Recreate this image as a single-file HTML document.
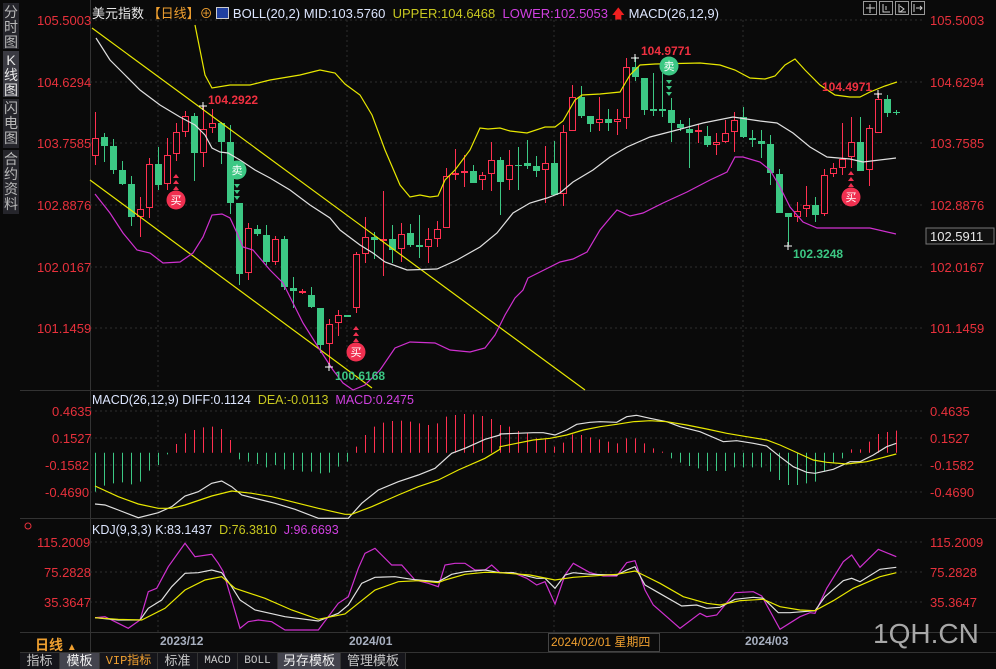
<!DOCTYPE html>
<html><head><meta charset="utf-8"><style>
body{margin:0;width:996px;height:669px;background:#0a0a0a;overflow:hidden;font-family:"Liberation Sans","Noto Sans CJK SC",sans-serif;position:relative}
.ab{position:absolute;white-space:nowrap}
.side{position:absolute;left:3px;width:16px;background:#25252b;color:#b8b8b8;font-size:14px;line-height:15px;text-align:center}
.tab{position:absolute;top:653px;height:16px;font-size:13px;line-height:16px;text-align:center;color:#c8c8c8;background:#15151a;border-right:1px solid #333}
</style></head><body>
<div class="side" style="top:3px;height:44px;padding-top:2px">分<br>时<br>图</div>
<div class="side" style="top:51px;height:44px;padding-top:2px;background:#3a3a42;color:#e8e8e8">K<br>线<br>图</div>
<div class="side" style="top:99px;height:47px;padding-top:2px">闪<br>电<br>图</div>
<div class="side" style="top:150px;height:62px;padding-top:2px">合<br>约<br>资<br>料</div>

<svg class="ab" style="left:0;top:0" width="996" height="669" xmlns="http://www.w3.org/2000/svg" id="s">
<g stroke="#2e2e2e" stroke-dasharray="2,3" stroke-width="1">
<line x1="90" y1="20" x2="925" y2="20"/><line x1="90" y1="82" x2="925" y2="82"/><line x1="90" y1="143" x2="925" y2="143"/><line x1="90" y1="205" x2="925" y2="205"/><line x1="90" y1="267" x2="925" y2="267"/><line x1="90" y1="328" x2="925" y2="328"/>
<line x1="90" y1="411" x2="925" y2="411"/><line x1="90" y1="438" x2="925" y2="438"/><line x1="90" y1="465" x2="925" y2="465"/><line x1="90" y1="492" x2="925" y2="492"/>
<line x1="90" y1="542" x2="925" y2="542"/><line x1="90" y1="572" x2="925" y2="572"/><line x1="90" y1="602" x2="925" y2="602"/>
<line x1="158" y1="20" x2="158" y2="632"/><line x1="347" y1="20" x2="347" y2="632"/><line x1="554" y1="20" x2="554" y2="632"/><line x1="743" y1="20" x2="743" y2="632"/>
</g>
<g stroke="#333" stroke-width="1">
<line x1="90.5" y1="0" x2="90.5" y2="652"/><line x1="20" y1="390.5" x2="996" y2="390.5"/><line x1="20" y1="518.5" x2="996" y2="518.5"/><line x1="20" y1="632.5" x2="996" y2="632.5"/><line x1="20" y1="652.5" x2="996" y2="652.5"/>
</g>
<g fill="#e8313c" font-size="13" font-family="Liberation Sans, sans-serif">
<text x="37" y="25">105.5003</text><text x="37" y="87">104.6294</text><text x="37" y="148">103.7585</text><text x="37" y="210">102.8876</text><text x="37" y="272">102.0167</text><text x="37" y="333">101.1459</text>
<text x="930" y="25">105.5003</text><text x="930" y="87">104.6294</text><text x="930" y="148">103.7585</text><text x="930" y="210">102.8876</text><text x="930" y="272">102.0167</text><text x="930" y="333">101.1459</text>
<text x="52" y="416">0.4635</text><text x="52" y="443">0.1527</text><text x="45" y="470">-0.1582</text><text x="45" y="497">-0.4690</text>
<text x="930" y="416">0.4635</text><text x="930" y="443">0.1527</text><text x="930" y="470">-0.1582</text><text x="930" y="497">-0.4690</text>
<text x="37" y="547">115.2009</text><text x="44" y="577">75.2828</text><text x="44" y="607">35.3647</text>
<text x="930" y="547">115.2009</text><text x="930" y="577">75.2828</text><text x="930" y="607">35.3647</text>
</g>
<rect x="926" y="228" width="68" height="16" fill="#111" stroke="#777"/>
<text x="930" y="241" fill="#e8e8e8" font-size="13">102.5911</text>
<g id="cd"></g>
<g fill="none" stroke-width="1.2">
<line x1="92" y1="28" x2="585" y2="390" stroke="#e8e800"/>
<line x1="90" y1="180" x2="372" y2="388" stroke="#e8e800"/>
<polyline stroke="#e8e800" points="195,25 205,75 212,88 230,85 250,85 270,80 300,75 320,70 335,73 345,84 360,95 372,115 385,150 400,185 410,197 420,195 430,197 438,196 445,180 455,170 470,150 480,128 488,129 500,128 510,131 527,133 545,127 555,127 563,121 575,100 582,95 600,94 620,92 630,75 640,65 655,64 700,63 720,65 735,70 750,78 765,79 775,76 785,65 795,59 805,70 820,85 835,95 850,97 860,97 870,92 885,86 897,82"/>
<polyline stroke="#e0e0e0" points="96,38 110,60 125,75 140,90 160,105 180,117 195,125 205,135 212,148 220,152 228,153 240,160 255,170 270,178 290,190 310,205 330,218 340,230 360,245 373,253 385,262 407,270 437,269 457,260 480,247 497,233 513,213 530,203 547,198 560,193 573,182 593,170 610,157 627,147 650,137 677,130 703,123 733,117 760,121 777,123 793,133 810,147 827,157 850,159 863,162 896,158"/>
<polyline stroke="#d030d0" points="95,194 110,213 123,233 137,250 150,253 163,263 180,262 193,253 203,237 212,215 222,214 230,218 237,233 243,247 253,250 270,270 283,283 293,303 303,323 320,350 333,370 343,383 353,390 365,385 380,370 395,348 410,342 435,343 450,350 470,352 485,348 495,335 505,315 515,298 523,290 528,278 540,272 560,262 573,259 587,252 600,230 610,218 617,210 630,216 643,213 663,203 687,192 710,180 727,172 735,157 743,157 760,162 770,170 780,187 790,207 803,222 817,228 843,228 870,228 896,234"/>
</g>
<g font-size="12" font-weight="bold">
<text x="208" y="104" fill="#f03040">104.2922</text>
<text x="335" y="380" fill="#3cc884">100.6168</text>
<text x="641" y="55" fill="#f03040">104.9771</text>
<text x="793" y="258" fill="#3cc884">102.3248</text>
<text x="822" y="91" fill="#f03040">104.4971</text>
</g>
<g stroke="#fff" stroke-width="1"><path d="M199 106h8M203 102v8M325 367h8M329 363v8M631 58h8M635 54v8M784 246h8M788 242v8M874 94h8M878 90v8"/></g>
<g font-size="11" text-anchor="middle" fill="#fff">
<circle cx="176" cy="200" r="9.5" fill="#f03050"/><text x="176" y="204">买</text><path d="M176 174l-3 4h6zM176 180l-3 4h6zM176 186l-3 4h6z" fill="#f03050"/>
<circle cx="356" cy="352" r="9.5" fill="#f03050"/><text x="356" y="356">买</text><path d="M356 326l-3 4h6zM356 332l-3 4h6zM356 338l-3 4h6z" fill="#f03050"/>
<circle cx="851" cy="197" r="9.5" fill="#f03050"/><text x="851" y="201">买</text><path d="M851 171l-3 4h6zM851 177l-3 4h6zM851 183l-3 4h6z" fill="#f03050"/>
<circle cx="237" cy="170" r="9.5" fill="#3cc884"/><text x="237" y="174">卖</text><path d="M237 188l-3 -4h6zM237 194l-3 -4h6zM237 200l-3 -4h6z" fill="#3cc884"/>
<circle cx="669" cy="66" r="9.5" fill="#3cc884"/><text x="669" y="70">卖</text><path d="M669 84l-3 -4h6zM669 90l-3 -4h6zM669 96l-3 -4h6z" fill="#3cc884"/>
</g>
<g id="mb"></g>
<g fill="none" stroke-width="1.2">
<polyline stroke="#e0e0e0" id="dif" points=""/>
<polyline stroke="#e8e800" id="dea" points=""/>
<polyline stroke="#d030d0" id="kj" points=""/>
<polyline stroke="#e0e0e0" id="kk" points=""/>
<polyline stroke="#e8e800" id="kd" points=""/>
</g>
<text x="873" y="643" fill="#a8a8a8" font-size="28">1QH.CN</text>
<g fill="none" stroke="#999"><rect x="863.5" y="1.5" width="13" height="13"/><rect x="879.5" y="1.5" width="13" height="13"/><rect x="895.5" y="1.5" width="13" height="13"/><rect x="911.5" y="1.5" width="13" height="13"/>
<path d="M870 4v9M866 8h9M883 4v8h7M886 6v4M899 4v8h7M900 6l4 3-4 3M914 4v8M916 8h6M920 6l2 2-2 2" stroke="#ccc"/></g>
<circle cx="28" cy="526" r="3" fill="none" stroke="#e8313c"/>
</svg>

<div class="ab" style="left:92px;top:3px;font-size:13px;color:#e8e8e8">美元指数 <span style="color:#f0a030">【日线】</span><span style="color:#f0a030">⊕</span> <span style="display:inline-block;width:11px;height:10px;border:1px solid #ccc;background:#2040a0;vertical-align:-1px"></span> <span style="color:#dde6ff">BOLL(20,2) MID:103.5760</span> &nbsp;<span style="color:#c8c820">UPPER:104.6468</span> &nbsp;<span style="color:#d040e0">LOWER:102.5053</span> <span style="color:#f02020">🡅</span> <span style="color:#dde6ff">MACD(26,12,9)</span></div>
<div class="ab" style="left:92px;top:393px;font-size:12.5px;color:#dde6ff">MACD(26,12,9) DIFF:0.1124 &nbsp;<span style="color:#c8c820">DEA:-0.0113</span> &nbsp;<span style="color:#d040e0">MACD:0.2475</span></div>
<div class="ab" style="left:92px;top:523px;font-size:12.5px;color:#dde6ff">KDJ(9,3,3) K:83.1437 &nbsp;<span style="color:#c8c820">D:76.3810</span> &nbsp;<span style="color:#d040e0">J:96.6693</span></div>
<div class="ab" style="left:35px;top:635px;font-size:14px;font-weight:bold;color:#f0a030">日线 <span style="font-size:10px">▲</span></div>
<div class="ab" style="left:160px;top:634px;font-size:12px;font-weight:bold;color:#a8b0c0">2023/12</div>
<div class="ab" style="left:349px;top:634px;font-size:12px;font-weight:bold;color:#a8b0c0">2024/01</div>
<div class="ab" style="left:548px;top:633px;width:108px;height:17px;border:1px solid #444;font-size:12px;color:#f0a030;line-height:17px;padding-left:2px">2024/02/01 星期四</div>
<div class="ab" style="left:745px;top:634px;font-size:12px;font-weight:bold;color:#a8b0c0">2024/03</div>

<div class="tab" style="left:20px;width:39px">指标</div>
<div class="tab" style="left:60px;width:39px;background:#44444e;color:#f0f0f0">模板</div>
<div class="tab" style="left:100px;width:57px;color:#f0a030;font-family:'Liberation Mono','Noto Sans CJK SC',monospace;font-size:12px">VIP指标</div>
<div class="tab" style="left:158px;width:39px">标准</div>
<div class="tab" style="left:198px;width:39px;font-family:'Liberation Mono',monospace;font-size:11px">MACD</div>
<div class="tab" style="left:238px;width:39px;font-family:'Liberation Mono',monospace;font-size:11px">BOLL</div>
<div class="tab" style="left:278px;width:62px;background:#44444e;color:#f0f0f0">另存模板</div>
<div class="tab" style="left:341px;width:64px">管理模板</div>

<script>
var C=`r 138 156 112 165|g 137 146 133 162|g 146 170 139 174|g 170 184 161 185|g 184 217 176 226|r 209 217 197 237|r 164 208 158 218|g 164 185 147 190|r 155 184 138 190|r 132 154 123 161|r 116 132 111 137|g 116 153 113 181|r 129 153 106 167|r 123 128 109 133|g 123 142 122 164|g 142 203 125 214|g 203 274 203 285|r 228 273 223 280|g 229 234 225 236|g 235 262 225 265|r 239 262 236 265|g 239 287 236 290|g 288 291 277 308|r 291 293 289 294|g 295 307 287 308|g 308 345 308 353|r 324 344 319 366|r 315 323 310 336|g 315 317 315 317|r 254 308 252 313|r 237 254 217 263|g 237 240 232 259|r 239 241 191 276|g 239 250 225 263|r 234 249 223 262|g 233 245 224 247|g 245 247 215 258|r 239 247 228 263|r 229 239 221 247|r 176 228 168 228|r 173 175 149 180|r 171 173 155 187|g 171 183 165 183|r 175 180 172 190|r 160 174 142 191|g 160 182 157 215|r 165 180 150 190|g 165 166 147 190|g 163 166 140 169|g 166 171 156 177|r 163 170 146 203|g 163 195 141 195|r 132 194 125 206|r 97 131 85 131|g 97 116 86 118|g 116 124 116 132|r 119 123 97 131|g 119 123 109 131|r 119 122 109 135|r 67 118 58 129|g 67 77 57 81|g 78 110 78 115|g 109 111 73 116|g 109 111 73 117|g 110 123 98 142|g 124 128 120 131|g 129 133 118 168|r 130 132 124 143|g 136 145 126 147|r 142 145 133 155|r 133 142 120 143|r 120 132 112 152|g 117 137 107 138|g 138 140 130 147|g 141 144 130 158|g 144 173 135 185|g 174 213 169 213|g 213 217 213 245|r 211 217 202 222|r 205 209 186 217|g 205 215 197 222|r 175 214 169 216|r 168 174 163 177|r 159 168 123 175|r 142 157 117 168|g 142 171 117 171|r 128 170 125 186|r 99 133 93 133|g 99 113 95 117|g 112 113 110 115`.split('|');
var R='#ff3050',G='#3cc884',h='';
C.forEach(function(s,i){var a=s.split(' '),x=95.5+9*i,t=+a[1],b=+a[2],wt=+a[3],wb=+a[4];if(b-t<1)b=t+1;var c=a[0]=='r'?R:G;
if(a[0]=='r'){h+='<line x1="'+x+'" y1="'+wt+'" x2="'+x+'" y2="'+t+'" stroke="'+c+'"/><line x1="'+x+'" y1="'+b+'" x2="'+x+'" y2="'+wb+'" stroke="'+c+'"/><rect x="'+(x-3)+'" y="'+(t+0.5)+'" width="6" height="'+(b-t-1)+'" fill="#0a0a0a" stroke="'+c+'"/>';}
else{h+='<line x1="'+x+'" y1="'+wt+'" x2="'+x+'" y2="'+wb+'" stroke="'+c+'"/><rect x="'+(x-3.5)+'" y="'+t+'" width="7" height="'+(b-t)+'" fill="'+c+'"/>';}});
document.getElementById('cd').innerHTML=h;
var M=[305,287,280,277,283,275,242,225,193,162,130,120,112,110,117,150,208,215,222,232,225,238,240,245,245,250,248,230,215,170,135,110,98,93,92,95,100,105,100,80,75,72,73,78,87,105,110,123,130,145,148,170,158,133,135,142,148,155,160,145,145,160,175,185,205,218,228,235,243,243,243,232,232,232,232,245,270,285,285,280,275,245,220,205,178,178,155,132,126,122];
var z=452.7,mh='';M.forEach(function(v,i){var y=390+v/3,x=95.5+9*i;mh+='<line x1="'+x+'" y1="'+z+'" x2="'+x+'" y2="'+y+'" stroke="'+(y<z?R:G)+'"/>';});
document.getElementById('mb').innerHTML=mh;
function P(a,b){return a.map(function(p){return (85+p[0]/3).toFixed(1)+','+(390+p[1]/3).toFixed(1)}).concat(b.map(function(p){return (500+p[0]/3).toFixed(1)+','+(390+p[1]/3).toFixed(1)})).join(' ');}
function S(id,a,b){document.getElementById(id).setAttribute('points',P(a,b));}
S('dif',[[30,342],[60,345],[100,360],[160,383],[220,368],[260,350],[300,318],[340,305],[380,280],[410,273],[440,290],[470,315],[530,330],[570,340],[630,358],[700,385],[790,385],[830,340],[880,300],[940,275],[1000,255],[1050,235],[1100,190],[1140,175],[1200,148],[1245,135]],[[0,132],[50,130],[100,128],[130,128],[165,135],[200,120],[230,103],[270,97],[300,95],[350,97],[380,80],[410,76],[450,85],[500,95],[540,110],[600,125],[670,155],[710,152],[760,160],[800,168],[840,200],[880,230],[920,247],[945,250],[1000,238],[1050,215],[1080,215],[1120,195],[1160,170],[1189,160]]);
S('dea',[[30,288],[100,320],[160,342],[220,355],[260,355],[300,345],[380,318],[440,303],[500,310],[560,320],[640,340],[700,355],[780,373],[800,373],[860,350],[940,315],[1000,290],[1060,270],[1120,240],[1200,205],[1245,178]],[[0,170],[50,160],[100,150],[150,145],[200,135],[250,120],[300,110],[350,103],[400,95],[450,92],[500,95],[560,105],[620,117],[680,130],[740,140],[800,150],[840,165],[880,183],[940,210],[980,217],[1040,222],[1100,215],[1140,205],[1189,192]]);
S('kj',[[30,683],[60,680],[100,700],[130,715],[165,690],[190,605],[215,595],[250,530],[300,460],[330,500],[380,493],[400,520],[415,545],[440,630],[465,715],[490,695],[520,690],[560,695],[600,720],[700,720],[730,680],[760,640],[790,620],[820,535],[840,490],[870,475],[920,525],[950,525],[990,570],[1030,580],[1060,590],[1080,525],[1110,520],[1140,520],[1170,540],[1200,540],[1220,525],[1245,548]],[[0,548],[40,548],[80,565],[110,585],[135,575],[165,642],[195,555],[220,520],[270,548],[310,558],[350,558],[380,518],[405,512],[435,600],[460,645],[500,680],[540,715],[600,670],[620,680],[650,675],[705,608],[760,605],[785,618],[840,718],[900,680],[930,668],[945,670],[980,595],[1030,515],[1055,495],[1080,532],[1135,478],[1189,500]]);
S('kk',[[30,683],[100,690],[165,690],[190,655],[230,630],[260,590],[300,550],[340,548],[380,540],[410,548],[440,590],[465,630],[510,660],[600,680],[700,693],[760,670],[790,645],[830,580],[870,562],[930,560],[980,568],[1060,575],[1100,553],[1140,545],[1200,540],[1245,548]],[[0,548],[40,548],[110,565],[135,565],[165,595],[195,555],[220,548],[270,553],[350,555],[380,540],[405,530],[435,585],[470,605],[545,648],[590,645],[620,655],[660,652],[705,628],[760,622],[790,625],[835,668],[870,668],[945,662],[975,620],[1030,572],[1055,565],[1080,575],[1140,538],[1189,532]]);
S('kd',[[30,683],[100,688],[170,690],[240,655],[300,600],[360,570],[410,560],[450,595],[540,625],[620,660],[700,688],[780,672],[820,640],[870,600],[940,575],[1000,572],[1060,578],[1080,570],[1140,553],[1200,547],[1245,548]],[[0,548],[90,555],[165,570],[220,562],[350,553],[405,543],[430,555],[480,580],[550,620],[620,640],[660,645],[720,632],[790,628],[840,650],[900,660],[945,662],[1000,632],[1060,595],[1140,560],[1189,548]]);
</script>
</body></html>
